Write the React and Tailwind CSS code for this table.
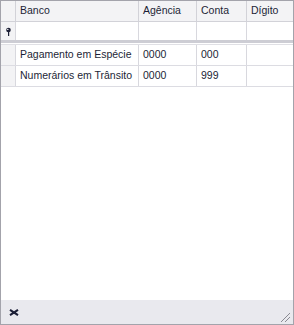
export default function App() {
  const cols = "grid grid-cols-[15px_123px_58px_50px_1fr]";
  const rows = [
    ["Pagamento em Espécie", "0000", "000", ""],
    ["Numerários em Trânsito", "0000", "999", ""],
  ];

  return (
    <div
      className="w-[294px] h-[325px] border border-[#a3a3ab] bg-white flex flex-col text-[10.5px] text-[#1c1f36]"
      style={{ fontFamily: '"Liberation Sans", Arial, sans-serif' }}
    >
      {/* Header */}
      <div className={`${cols} h-[21px] bg-[#f3f3f5] border-b border-[#d2d2d8]`}>
        <div className="border-r border-[#d2d2d8]" />
        <div className="border-r border-[#d2d2d8] flex items-center pl-[4px]">Banco</div>
        <div className="border-r border-[#d2d2d8] flex items-center pl-[4px]">Agência</div>
        <div className="border-r border-[#d2d2d8] flex items-center pl-[4px]">Conta</div>
        <div className="flex items-center pl-[4px]">Dígito</div>
      </div>

      {/* Auto filter row */}
      <div className={`${cols} h-[21px] border-b-[3px] border-[#cdcdd4]`}>
        <div className="border-r border-[#d8d8de] bg-[#f3f3f5] flex items-center justify-center">
          <svg width="7" height="9" viewBox="0 0 7 9">
            <circle cx="3.5" cy="3" r="2.3" fill="#1c1f36" />
            <rect x="3" y="4" width="1.2" height="5" fill="#1c1f36" />
            <circle cx="2.8" cy="2.4" r="0.7" fill="#ffffff" />
          </svg>
        </div>
        <div className="border-r border-[#d8d8de]" />
        <div className="border-r border-[#d8d8de]" />
        <div className="border-r border-[#d8d8de]" />
        <div />
      </div>
      <div className="h-[2px] border-b border-[#e0e0e5]" />

      {/* Data rows */}
      {rows.map((r, i) => (
        <div key={i} className={`${cols} h-[21px] border-b border-[#dcdce2]`}>
          <div className="border-r border-[#d8d8de] bg-[#f3f3f5]" />
          {r.map((c, j) => (
            <div
              key={j}
              className={`flex items-center pl-[4px] whitespace-nowrap overflow-hidden ${j < 3 ? "border-r border-[#d8d8de]" : ""}`}
            >
              {c}
            </div>
          ))}
        </div>
      ))}

      <div className="flex-1" />

      {/* Footer */}
      <div className="h-[24px] bg-[#e9e9ee] flex items-center justify-between pl-[8px] pr-[2px]">
        <svg width="10" height="7" viewBox="0 0 10 7">
          <path d="M1 0.8 L9 6.2 M9 0.8 L1 6.2" stroke="#1c1f36" strokeWidth="2" />
        </svg>
        <svg width="12" height="12" viewBox="0 0 12 12" className="self-end mb-[1px]">
          <g fill="#8a8a92">
            <rect x="10" y="2" width="1" height="1" />
            <rect x="9" y="3" width="1" height="1" />
            <rect x="8" y="4" width="1" height="1" />
            <rect x="7" y="5" width="1" height="1" />
            <rect x="6" y="6" width="1" height="1" />
            <rect x="5" y="7" width="1" height="1" />
            <rect x="4" y="8" width="1" height="1" />
            <rect x="3" y="9" width="1" height="1" />
            <rect x="2" y="10" width="1" height="1" />
            <rect x="10" y="6" width="1" height="1" />
            <rect x="9" y="7" width="1" height="1" />
            <rect x="8" y="8" width="1" height="1" />
            <rect x="7" y="9" width="1" height="1" />
            <rect x="6" y="10" width="1" height="1" />
          </g>
        </svg>
      </div>
    </div>
  );
}
